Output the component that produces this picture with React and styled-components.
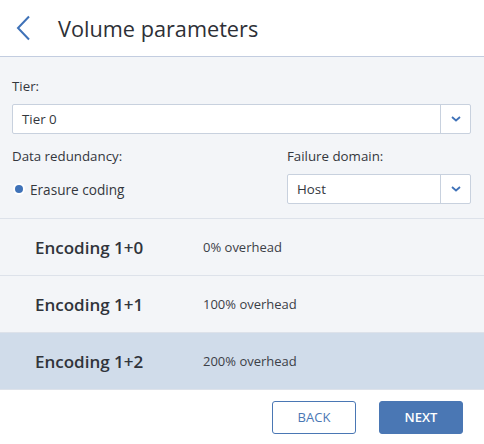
import React from "react";
import styled, { createGlobalStyle } from "styled-components";

const GlobalStyle = createGlobalStyle`
  html, body {
    margin: 0;
    padding: 0;
    background: #ffffff;
  }
  body {
    font-family: "Open Sans", "Liberation Sans", sans-serif;
    color: #2b3440;
  }
`;

const Page = styled.div`
  width: 484px;
  height: 444px;
  display: flex;
  flex-direction: column;
  overflow: hidden;
`;

const Header = styled.header`
  height: 56px;
  display: flex;
  align-items: center;
  gap: 26px;
  padding-left: 16px;
  border-bottom: 1px solid #c3cde0;
  background: #fff;
  flex-shrink: 0;
`;

const BackIcon = styled.svg`
  width: 16px;
  height: 26px;
  display: block;
`;

const Title = styled.h1`
  margin: 0;
  font-size: 21.7px;
  font-weight: 400;
  color: #2d3036;
`;

const Body = styled.div`
  flex: 1;
  background: #f3f5f8;
  display: flex;
  flex-direction: column;
`;

const Form = styled.div`
  padding: 20px 13px 14px 12px;
  display: flex;
  flex-direction: column;
  border-bottom: 1px solid #dde2ea;
`;

const Label = styled.div`
  font-size: 13.3px;
  line-height: 18px;
  color: #33373d;
  margin-bottom: 9px;
`;

const SelectBox = styled.div`
  height: 30px;
  display: flex;
  background: #fff;
  border: 1px solid #c8d1de;
  border-radius: 2px;
  box-sizing: border-box;
`;

const SelectValue = styled.div`
  flex: 1;
  display: flex;
  align-items: center;
  padding-left: 9px;
  font-size: 13.3px;
  color: #33373d;
`;

const SelectButton = styled.div`
  width: 29px;
  border-left: 1px solid #c8d1de;
  display: flex;
  align-items: center;
  justify-content: center;
`;

const Columns = styled.div`
  display: flex;
  margin-top: 13px;
`;

const Column = styled.div`
  display: flex;
  flex-direction: column;
  width: ${(p) => p.$width || "auto"};
  flex: ${(p) => (p.$grow ? 1 : "none")};
`;

const Radio = styled.div`
  display: flex;
  align-items: center;
  gap: 7px;
  height: 30px;
  padding-left: 3px;
  font-size: 13.6px;
  color: #33373d;
`;

const Dot = styled.span`
  width: 8px;
  height: 8px;
  border-radius: 50%;
  background: #3f72b8;
  box-shadow: 0 0 0 2px #fff;
`;

const Row = styled.div`
  height: 56px;
  display: flex;
  align-items: center;
  padding-left: 35px;
  border-bottom: 1px solid #dde2ea;
  background: ${(p) => (p.$selected ? "#d0dcea" : "transparent")};
`;

const RowName = styled.div`
  width: 168px;
  font-size: 17px;
  font-weight: 600;
  color: #30343b;
`;

const RowInfo = styled.div`
  font-size: 13px;
  color: #3c4047;
`;

const Footer = styled.footer`
  height: 54px;
  background: #fff;
  display: flex;
  align-items: center;
  justify-content: flex-end;
  gap: 23px;
  padding-right: 21px;
  flex-shrink: 0;
`;

const Button = styled.button`
  width: 84px;
  height: 33px;
  box-sizing: border-box;
  border-radius: 3px;
  font-family: inherit;
  font-size: 13px;
  font-weight: ${(p) => (p.$primary ? 600 : 400)};
  border: 1.5px solid #4a77b4;
  background: ${(p) => (p.$primary ? "#4a77b4" : "#fff")};
  color: ${(p) => (p.$primary ? "#fff" : "#4a77b4")};
  cursor: pointer;
`;

const Chevron = () => (
  <svg width="10" height="6" viewBox="0 0 10 6">
    <path d="M1 1l4 3.5L9 1" fill="none" stroke="#3f72b8" strokeWidth="1.8" />
  </svg>
);

const Select = ({ value }) => (
  <SelectBox>
    <SelectValue>{value}</SelectValue>
    <SelectButton>
      <Chevron />
    </SelectButton>
  </SelectBox>
);

const encodings = [
  { name: "Encoding 1+0", info: "0% overhead" },
  { name: "Encoding 1+1", info: "100% overhead" },
  { name: "Encoding 1+2", info: "200% overhead", selected: true },
];

export default function App() {
  return (
    <Page>
      <GlobalStyle />
      <Header>
        <BackIcon viewBox="0 0 16 26">
          <path d="M13 1.5L2 13l11 11.5" fill="none" stroke="#3f72b8" strokeWidth="2" />
        </BackIcon>
        <Title>Volume parameters</Title>
      </Header>
      <Body>
        <Form>
          <Label>Tier:</Label>
          <Select value="Tier 0" />
          <Columns>
            <Column $grow>
              <Label>Data redundancy:</Label>
              <Radio>
                <Dot />
                Erasure coding
              </Radio>
            </Column>
            <Column $width="184px">
              <Label>Failure domain:</Label>
              <Select value="Host" />
            </Column>
          </Columns>
        </Form>
        {encodings.map((e) => (
          <Row key={e.name} $selected={e.selected}>
            <RowName>{e.name}</RowName>
            <RowInfo>{e.info}</RowInfo>
          </Row>
        ))}
      </Body>
      <Footer>
        <Button>BACK</Button>
        <Button $primary>NEXT</Button>
      </Footer>
    </Page>
  );
}
